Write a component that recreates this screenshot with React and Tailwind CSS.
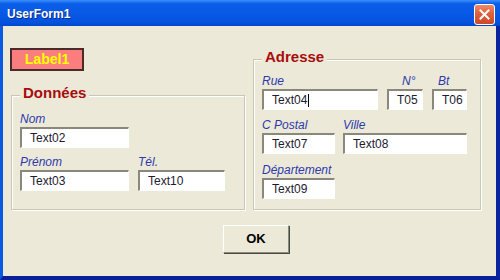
import React from "react";

const Field = ({ label, value, box, labelClass = "", caret = false }) => (
    <div className="flex flex-col">
        <span
            className={`h-[15px] leading-[15px] text-[12px] italic text-[#2c39ae] ${labelClass}`}
        >
            {label}
        </span>
        <div
            className={`${box} h-[21px] flex items-center bg-white border-t-2 border-l-2 border-r border-b border-t-[#8a877c] border-l-[#8a877c] border-r-white border-b-white pl-[8px] text-[12px] leading-[18px] text-[#231a30]`}
        >
            {value}
            {caret && <span className="ml-[1px] w-px h-[13px] bg-black" />}
        </div>
    </div>
);

const GroupBox = ({ title, className, children }) => (
    <div
        className={`flex flex-col border border-[#c9c6b6] shadow-[inset_1px_1px_0_#fff,1px_1px_0_#fff] ${className}`}
    >
        <span className="-mt-[12px] self-start h-[18px] px-[3px] bg-[#ECE9D8] text-[15px] leading-[18px] font-bold text-[#a80d0d]">
            {title}
        </span>
        {children}
    </div>
);

const App = () => {
    return (
        <div className="w-[500px] h-[280px] flex flex-col font-['Liberation_Sans',Arial,sans-serif] select-none">
            {/* title bar */}
            <div className="h-[26px] flex items-start justify-between bg-[linear-gradient(180deg,#3d8ffc_0%,#0a5fe9_14%,#0858e6_55%,#0453df_85%,#0147cc_100%)]">
                <span className="pl-[7px] pt-[7px] text-[12px] leading-[15px] font-bold text-white [text-shadow:1px_1px_0_#0a2a8a]">
                    UserForm1
                </span>
                <button className="mt-[4px] mr-[5px] w-[21px] h-[21px] flex items-center justify-center rounded-[3px] border border-white bg-[linear-gradient(180deg,#ee8a6a_0%,#e0603c_45%,#cc4a2a_100%)]">
                    <svg width="11" height="11" viewBox="0 0 11 11">
                        <path
                            d="M1.5 1.5 L9.5 9.5 M9.5 1.5 L1.5 9.5"
                            stroke="#fff"
                            strokeWidth="2"
                            strokeLinecap="square"
                        />
                    </svg>
                </button>
            </div>

            {/* client area */}
            <div className="flex-1 flex flex-col bg-[#ECE9D8] border-l-[3px] border-r-[4px] border-b-[4px] border-l-[#0b5ae4] border-r-[#0a24a0] border-b-[#0a1f98]">
                <div className="flex pl-[7px]">
                    <div className="flex flex-col items-start pt-[22px]">
                        <div className="w-[74px] h-[23px] flex items-center justify-center bg-[#fb7e7e] border-2 border-[#4a2a2a] text-[14px] font-bold text-[#ffff00]">
                            Label1
                        </div>
                        <GroupBox
                            title="Données"
                            className="mt-[24px] ml-[1px] w-[234px] pl-[8px] pb-[18px]"
                        >
                            <div className="mt-[10px]">
                                <Field label="Nom" value="Text02" box="w-[109px]" />
                            </div>
                            <div className="mt-[7px] flex gap-[9px]">
                                <Field label="Prénom" value="Text03" box="w-[109px]" />
                                <Field label="Tél." value="Text10" box="w-[87px]" />
                            </div>
                        </GroupBox>
                    </div>

                    <div className="ml-[8px] pt-[33px]">
                        <GroupBox
                            title="Adresse"
                            className="w-[228px] pl-[8px] pb-[10px]"
                        >
                            <div className="mt-[8px] flex gap-[9px]">
                                <Field label="Rue" value="Text04" box="w-[116px]" caret />
                                <Field
                                    label="N°"
                                    value="T05"
                                    box="w-[36px]"
                                    labelClass="pl-[15px]"
                                />
                                <Field
                                    label="Bt"
                                    value="T06"
                                    box="w-[35px]"
                                    labelClass="pl-[6px]"
                                />
                            </div>
                            <div className="mt-[8px] flex gap-[8px]">
                                <Field label="C Postal" value="Text07" box="w-[73px]" />
                                <Field label="Ville" value="Text08" box="w-[124px]" />
                            </div>
                            <div className="mt-[9px]">
                                <Field label="Département" value="Text09" box="w-[73px]" />
                            </div>
                        </GroupBox>
                    </div>
                </div>

                <div className="mt-[15px] pl-[220px]">
                    <button className="w-[66px] h-[28px] bg-[#ECE9D8] border border-t-white border-l-white border-r-[#8d8a7e] border-b-[#8d8a7e] shadow-[1px_1px_0_#4a4a44] text-[13px] font-bold text-black">
                        OK
                    </button>
                </div>
            </div>
        </div>
    );
};

export default App;
